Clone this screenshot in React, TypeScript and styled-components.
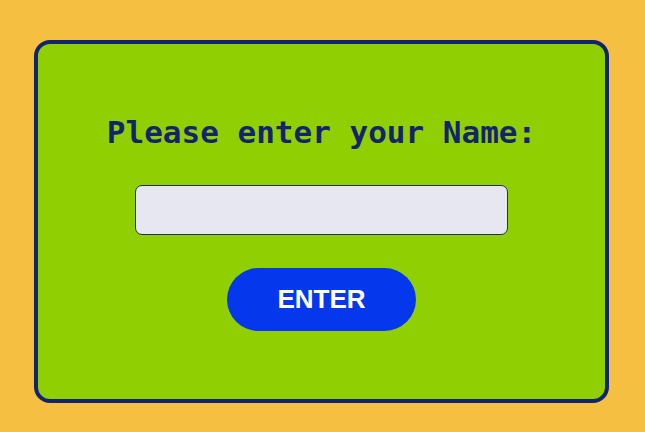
import React from "react";
import styled, { createGlobalStyle } from "styled-components";

const Global = createGlobalStyle`
  html, body { margin: 0; padding: 0; background: #f5bf42; }
  body { width: 645px; height: 432px; overflow: hidden; }
`;

const Page = styled.div`
  box-sizing: border-box;
  width: 645px;
  height: 432px;
  padding: 40px 36px 29px 34px;
  display: flex;
`;

const Card = styled.div`
  box-sizing: border-box;
  flex: 1;
  background: #90d002;
  border: 4px solid #13246e;
  border-radius: 16px;
  display: flex;
  flex-direction: column;
  align-items: center;
  padding-top: 68px;
`;

const Title = styled.h1`
  margin: 0;
  font-family: "DejaVu Sans Mono", "Liberation Mono", monospace;
  font-weight: bold;
  font-size: 31px;
  line-height: 40px;
  color: #13246e;
`;

const Input = styled.input`
  box-sizing: border-box;
  margin-top: 33px;
  width: 373px;
  height: 50px;
  background: #e6e7f0;
  border: 1px solid #1f2f5e;
  border-radius: 7px;
  outline: none;
`;

const Button = styled.button`
  margin-top: 33px;
  width: 189px;
  height: 63px;
  border: none;
  border-radius: 32px;
  background: #0538ec;
  color: #ffffff;
  font-family: "Liberation Sans", Arial, sans-serif;
  font-weight: bold;
  font-size: 26px;
  cursor: pointer;
`;

export default function App() {
  return (
    <>
      <Global />
      <Page>
        <Card>
          <Title>Please enter your Name:</Title>
          <Input type="text" />
          <Button>ENTER</Button>
        </Card>
      </Page>
    </>
  );
}
